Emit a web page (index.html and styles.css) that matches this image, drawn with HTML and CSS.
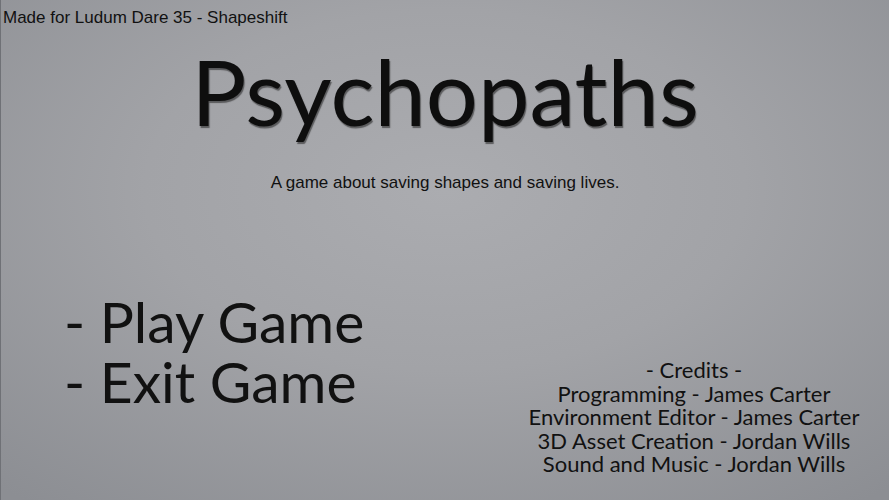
FILE: index.html
```html
<!DOCTYPE html>
<html>
<head>
<meta charset="utf-8">
<link rel="stylesheet" href="styles.css">
</head>
<body>
<div class="screen">
  <div class="note">Made for Ludum Dare 35 - Shapeshift</div>
  <header class="head">
    <h1 class="title">Psychopaths</h1>
    <p class="tagline">A game about saving shapes and saving lives.</p>
  </header>
  <div class="bottom">
    <ul class="menu">
      <li>- Play Game</li>
      <li>- Exit Game</li>
    </ul>
    <div class="credits">
      <div>- Credits -</div>
      <div>Programming - James Carter</div>
      <div>Environment Editor - James Carter</div>
      <div>3D Asset Creation - Jordan Wills</div>
      <div>Sound and Music - Jordan Wills</div>
    </div>
  </div>
</div>
</body>
</html>
```
FILE: styles.css
```css
html, body {
  margin: 0;
  padding: 0;
}
body {
  width: 889px;
  height: 500px;
  overflow: hidden;
}
.screen {
  width: 889px;
  height: 500px;
  box-sizing: border-box;
  border-left: 1px solid #6f7176;
  background: radial-gradient(ellipse 75% 80% at 50% 38%, #abacb0 0%, #a2a3a7 45%, #8c8e93 100%);
  display: flex;
  flex-direction: column;
  position: relative;
}
.note {
  font-family: "Liberation Sans", Arial, sans-serif;
  font-size: 17px;
  line-height: 18px;
  color: #111;
  padding: 9px 0 0 2px;
}
.head {
  display: flex;
  flex-direction: column;
  align-items: center;
}
.title {
  margin: 14px 0 0 0;
  font-family: Lato, "Open Sans", sans-serif;
  font-weight: 400;
  font-size: 92px;
  line-height: 100px;
  color: #0e0e0e;
  text-shadow: 1px 2px 1px rgba(30, 30, 30, 0.55);
}
.tagline {
  margin: 33px 0 0 0;
  font-family: "Liberation Sans", Arial, sans-serif;
  font-size: 17px;
  line-height: 18px;
  color: #111;
}
.bottom {
  display: flex;
  justify-content: space-between;
  align-items: flex-start;
  margin-top: 99px;
}
.menu {
  list-style: none;
  margin: 0;
  padding: 0 0 0 63px;
  font-family: Lato, "Open Sans", sans-serif;
  font-size: 57px;
  line-height: 60px;
  color: #111;
}
.credits {
  margin: 67px 10px 0 0;
  width: 370px;
  text-align: center;
  font-family: Lato, "Open Sans", sans-serif;
  font-size: 22px;
  line-height: 23.5px;
  color: #111;
}
```
